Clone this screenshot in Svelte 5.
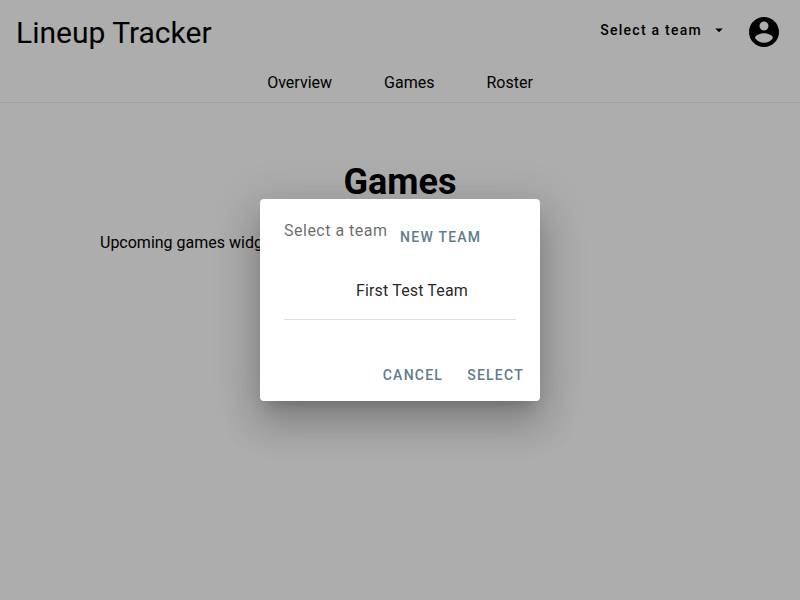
<script>
  const links = ['Overview', 'Games', 'Roster'];
  const teams = ['First Test Team'];
</script>

<div class="app">
  <header>
    <div class="toolbar">
      <div class="brand">Lineup Tracker</div>
      <button class="switcher">
        <span>Select a team</span>
        <svg width="18" height="18" viewBox="0 0 24 24"><path d="M7 10l5 5 5-5z" /></svg>
      </button>
      <svg class="account" width="36" height="36" viewBox="0 0 24 24">
        <path d="M12 2C6.48 2 2 6.48 2 12s4.48 10 10 10 10-4.48 10-10S17.52 2 12 2zm0 3c1.66 0 3 1.34 3 3s-1.34 3-3 3-3-1.34-3-3 1.34-3 3-3zm0 14.2c-2.5 0-4.71-1.28-6-3.22.03-1.99 4-3.08 6-3.08 1.99 0 5.97 1.09 6 3.08-1.29 1.94-3.5 3.22-6 3.22z" />
      </svg>
    </div>
    <nav>
      {#each links as link}<a href="#{link}">{link}</a>{/each}
    </nav>
  </header>
  <main>
    <h2>Games</h2>
    <p>Upcoming games widget</p>
  </main>
</div>

<div class="scrim">
  <div class="dialog" role="dialog">
    <div class="content">
      <div class="top">
        <span>Select a team</span>
        <button>NEW TEAM</button>
      </div>
      <ul>
        {#each teams as team}<li>{team}</li>{/each}
      </ul>
    </div>
    <footer>
      <button>CANCEL</button>
      <button>SELECT</button>
    </footer>
  </div>
</div>

<style>
  :global(body) {
    margin: 0;
    background: #fff;
  }
  .app, .dialog {
    font-family: Roboto, sans-serif;
    font-size: 16px;
    color: #000;
  }
  .app {
    height: 600px;
    overflow: hidden;
  }
  button {
    border: 0;
    background: none;
    padding: 0;
    font: 500 14px/36px Roboto, sans-serif;
    letter-spacing: 1.25px;
  }
  header {
    height: 102px;
    border-bottom: 1px solid #eee;
  }
  .toolbar {
    display: flex;
    height: 64px;
    align-items: center;
    padding: 0 18px 0 16px;
  }
  .brand {
    flex: 1;
    font-size: 30px;
    line-height: 36px;
    padding-top: 2px;
  }
  .switcher {
    display: flex;
    align-items: center;
    color: #000;
    margin: -4px 18px 0 0;
  }
  .switcher svg {
    margin-left: 8px;
  }
  nav {
    display: flex;
    justify-content: center;
    gap: 52px;
    line-height: 38px;
  }
  nav a {
    color: #000;
    text-decoration: none;
  }
  main {
    width: 600px;
    margin: 0 auto;
  }
  h2 {
    font-size: 36px;
    line-height: 42px;
    margin: 0;
    padding-top: 58px;
    text-align: center;
  }
  p {
    margin: 30px 0 0;
    line-height: 20px;
  }
  .scrim {
    position: absolute;
    inset: 0;
    display: flex;
    align-items: center;
    justify-content: center;
    background: rgba(0, 0, 0, 0.32);
  }
  .dialog {
    box-sizing: border-box;
    width: 280px;
    height: 202px;
    border-radius: 4px;
    background: #fff;
    box-shadow: 0 11px 15px -7px rgba(0, 0, 0, 0.2), 0 24px 38px 3px rgba(0, 0, 0, 0.14), 0 9px 46px 8px rgba(0, 0, 0, 0.12);
  }
  .dialog button {
    color: #607d8b;
  }
  .content {
    height: 150px;
    padding: 20px 24px 0;
    box-sizing: border-box;
  }
  .top {
    display: flex;
    align-items: flex-start;
    height: 42px;
    color: rgba(0, 0, 0, 0.6);
    letter-spacing: 0.5px;
    line-height: 24px;
  }
  .top button {
    margin-left: 12.5px;
  }
  ul {
    list-style: none;
    margin: 0;
    padding: 0;
    border-bottom: 1px solid #e0e0e0;
  }
  li {
    padding: 2px 0 0 72px;
    line-height: 56px;
    color: rgba(0, 0, 0, 0.87);
    letter-spacing: 0.15px;
  }
  footer {
    display: flex;
    justify-content: flex-end;
    gap: 24px;
    padding: 8px 16px 8px 8px;
  }
</style>
